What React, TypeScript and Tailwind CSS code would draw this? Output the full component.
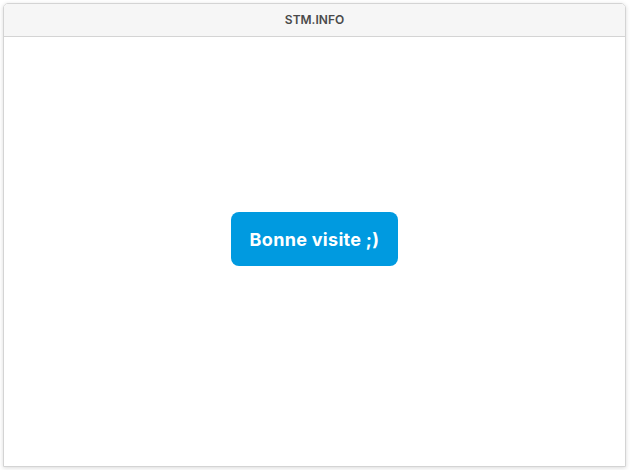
export default function App() {
  return (
    <div className="w-[630px] h-[470px] bg-white pt-[3px] pl-[3px] pr-[4px] font-['Inter','Liberation_Sans',sans-serif]">
      <div className="flex flex-col h-[464px] border border-[#d4d4d4] rounded-t-[5px] shadow-[0_1px_4px_rgba(0,0,0,0.15)] overflow-hidden">
        <div className="h-[33px] flex items-center justify-center bg-[#f6f6f6] border-b border-[#d4d4d4]">
          <span className="text-[12px] font-semibold text-[#4a4a4a]">STM.INFO</span>
        </div>
        <div className="flex-1 flex items-center justify-center pb-[25px] bg-white">
          <button className="w-[167px] h-[54px] rounded-[8px] bg-[#009ae0] text-white text-[18px] font-bold tracking-[0.3px]">
            Bonne visite ;)
          </button>
        </div>
      </div>
    </div>
  )
}
